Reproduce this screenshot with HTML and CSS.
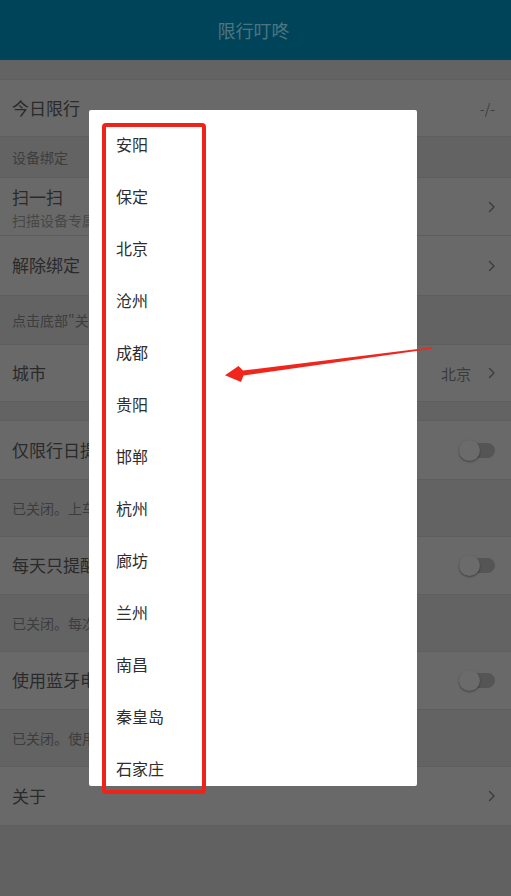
FILE: index.html
```html
<!DOCTYPE html>
<html lang="zh-CN">
<head>
<meta charset="utf-8">
<title>限行叮咚</title>
<link rel="stylesheet" href="styles.css">
</head>
<body>
<div class="screen">
  <header class="topbar">限行叮咚</header>
  <div class="gap gap-top"></div>
  <div class="row"><span class="label">今日限行</span><span class="value">-/-</span></div>
  <div class="section">设备绑定</div>
  <div class="row row-two">
    <div class="stack"><span class="label">扫一扫</span><span class="sub">扫描设备专属二维码绑定</span></div>
    <svg class="chev" viewBox="0 0 8 12" width="8" height="12"><polyline points="1.5,1.5 6,6 1.5,10.5"/></svg>
  </div>
  <div class="row row-tall"><span class="label">解除绑定</span>
    <svg class="chev" viewBox="0 0 8 12" width="8" height="12"><polyline points="1.5,1.5 6,6 1.5,10.5"/></svg>
  </div>
  <div class="note note-a">点击底部"关于"查看绑定说明</div>
  <div class="row"><span class="label">城市</span><span class="value city">北京</span>
    <svg class="chev" viewBox="0 0 8 12" width="8" height="12"><polyline points="1.5,1.5 6,6 1.5,10.5"/></svg>
  </div>
  <div class="gap gap-mid"></div>
  <div class="row row-tall"><span class="label">仅限行日提醒</span><span class="toggle"></span></div>
  <div class="note">已关闭。上车时提醒今日是否限行</div>
  <div class="row row-mid"><span class="label">每天只提醒一次</span><span class="toggle"></span></div>
  <div class="note">已关闭。每次上车都会提醒</div>
  <div class="row row-mid"><span class="label">使用蓝牙电话提醒</span><span class="toggle"></span></div>
  <div class="note">已关闭。使用系统通知提醒</div>
  <div class="row row-tall"><span class="label">关于</span>
    <svg class="chev" viewBox="0 0 8 12" width="8" height="12"><polyline points="1.5,1.5 6,6 1.5,10.5"/></svg>
  </div>
</div>

<div class="dialog">
  <ul class="city-list">
    <li>安阳</li>
    <li>保定</li>
    <li>北京</li>
    <li>沧州</li>
    <li>成都</li>
    <li>贵阳</li>
    <li>邯郸</li>
    <li>杭州</li>
    <li>廊坊</li>
    <li>兰州</li>
    <li>南昌</li>
    <li>秦皇岛</li>
    <li>石家庄</li>
  </ul>
</div>

<div class="mark-box"></div>
<svg class="mark-arrow" viewBox="0 0 511 896" width="511" height="896">
  <polygon points="432,347.3 243,370.6 238.5,366 225,375.2 241,382 243.5,375.6 432,348.7"/>
</svg>
</body>
</html>
```
FILE: styles.css
```css
* { box-sizing: border-box; }
html, body { margin: 0; padding: 0; }
body {
  width: 511px;
  height: 896px;
  overflow: hidden;
  background: #616161;
  font-family: "Noto Sans CJK SC", "Noto Sans", "Liberation Sans", sans-serif;
  position: relative;
}
.screen { display: flex; flex-direction: column; }
.topbar {
  height: 60px;
  background: #004459;
  color: #4d7581;
  font-size: 18px;
  display: flex;
  align-items: center;
  justify-content: center;
  padding-right: 4px;
}
.gap { background: #636363; }
.gap-top { height: 19px; }
.gap-mid { height: 18px; }
.row {
  height: 58px;
  background: #696969;
  border-top: 1px solid #5e5e5e;
  border-bottom: 1px solid #5e5e5e;
  display: flex;
  align-items: center;
  padding: 0 16px 0 12px;
}
.row + .row { border-top: none; }
.row-tall { height: 60px; }
.row-mid { height: 59px; }
.row-two { height: 59px; }
.label { font-size: 17px; color: #2a2a2a; flex: 1; line-height: 1; margin-top: -2px; }
.stack { flex: 1; display: flex; flex-direction: column; gap: 8px; padding-top: 1px; }
.stack .label { flex: none; margin-top: 0; }
.sub { font-size: 14px; color: #474747; line-height: 1; }
.value { font-size: 14px; color: #3e3e3e; }
.value.city { font-size: 15px; margin-right: 17px; color: #3b3b3b; }
.chev { fill: none; stroke: #3b3b3b; stroke-width: 1.4; stroke-linecap: round; stroke-linejoin: round; margin-right: -1px; }
.section {
  height: 40px;
  display: flex;
  align-items: center;
  padding-left: 12px;
  font-size: 14px;
  color: #3d3d3d;
  background: #636363;
}
.note {
  height: 56px;
  display: flex;
  align-items: center;
  padding-left: 12px;
  font-size: 14px;
  color: #3d3d3d;
  background: #636363;
}
.note-a { height: 48px; }
.toggle {
  width: 34px;
  height: 15px;
  border-radius: 8px;
  background: #555555;
  position: relative;
}
.toggle::before {
  content: "";
  position: absolute;
  left: -2px;
  top: -3px;
  width: 21px;
  height: 21px;
  border-radius: 50%;
  background: #6b6b6b;
  box-shadow: 0 1px 2px rgba(0, 0, 0, 0.4);
}
.dialog {
  position: absolute;
  left: 89px;
  top: 110px;
  width: 328px;
  height: 676px;
  background: #ffffff;
  border-radius: 2px;
  overflow: hidden;
}
.city-list { list-style: none; margin: 0; padding: 8px 0 0 0; }
.city-list li {
  height: 52px;
  line-height: 52px;
  padding-left: 27px;
  font-size: 16px;
  color: #2e2e2e;
}
.mark-box {
  position: absolute;
  left: 102px;
  top: 123px;
  width: 104px;
  height: 671px;
  border: 4px solid #f0231b;
  border-radius: 4px;
}
.mark-arrow { position: absolute; left: 0; top: 0; pointer-events: none; }
.mark-arrow polygon { fill: #f0261d; }
```
